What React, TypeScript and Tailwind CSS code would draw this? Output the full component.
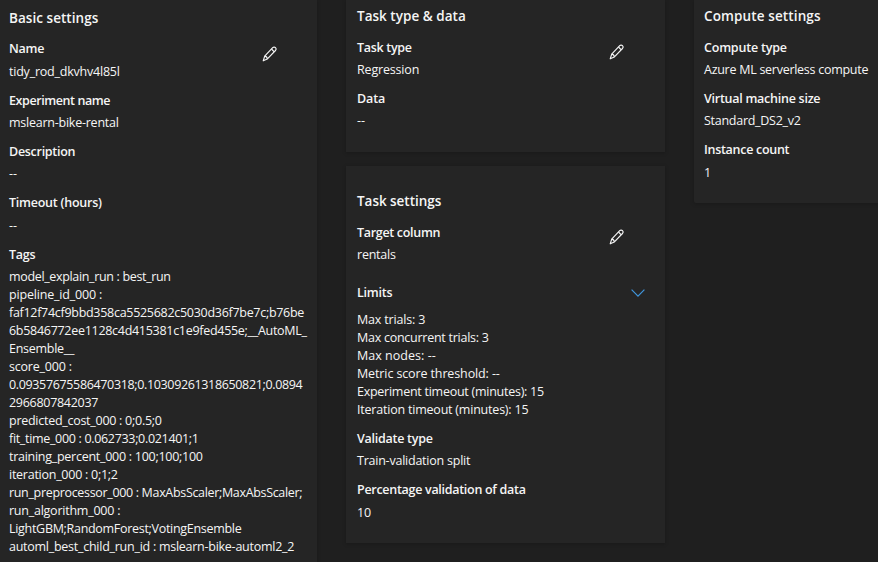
import type { ReactNode } from 'react';

type TextProps = { className?: string; children: ReactNode };

const Heading = ({ className = '', children }: TextProps) => (
  <h2 className={`h-[18px] whitespace-pre text-[13.5px] leading-[18px] font-semibold ${className}`}>{children}</h2>
);

const Label = ({ className = '', children }: TextProps) => (
  <h3 className={`h-[18px] whitespace-pre text-[12.5px] leading-[18px] font-semibold ${className}`}>{children}</h3>
);

const Line = ({ className = '', children }: TextProps) => (
  <p className={`h-[18px] whitespace-pre text-[12.5px] leading-[18px] ${className}`}>{children}</p>
);

const Pencil = () => (
  <svg width="16" height="16" viewBox="0 0 16 16" fill="none" stroke="#f5f5f5" strokeWidth="1.15" strokeLinejoin="round">
    <path d="M10.7 1.7a1.95 1.95 0 0 1 2.8 2.8L5.4 12.9 1.2 14.8 2.7 10.1Z" />
    <path d="M9.5 3 12.3 5.8M2.7 10.1C4 10.2 5.2 11.4 5.4 12.9" />
  </svg>
);

const Chevron = () => (
  <svg width="16" height="16" viewBox="0 0 16 16" fill="none" stroke="#4096dc" strokeWidth="1.2">
    <path d="M1.6 4.7 8 11.1l6.4-6.4" />
  </svg>
);

const card = 'bg-[#252525] shadow-[0_1px_4px_rgba(0,0,0,0.22)]';

export default function App() {
  return (
    <main className="flex h-[562px] w-[878px] items-start overflow-hidden bg-[#1f1f1f] font-['Open_Sans','Noto_Sans',sans-serif] text-[#f5f5f5]">
      <section className={`h-[562px] w-[317px] shrink-0 pt-[9px] pl-[9px] ${card}`}>
        <Heading className="tracking-[0.04px]">Basic settings</Heading>
        <div className="mt-[13px] flex justify-between pr-[39px]">
          <div>
            <Label className="tracking-[-0.24px]">Name</Label>
            <Line className="mt-[5px] tracking-[-0.22px]">tidy_rod_dkvhv4l85l</Line>
          </div>
          <div className="pt-[6px]"><Pencil /></div>
        </div>
        <Label className="mt-[11px] tracking-[-0.41px]">Experiment name</Label>
        <Line className="mt-1 tracking-[-0.24px]">mslearn-bike-rental</Line>
        <Label className="mt-[11px] tracking-[-0.28px]">Description</Label>
        <Line className="mt-1">--</Line>
        <Label className="mt-[11px] tracking-[-0.24px]">Timeout (hours)</Label>
        <Line className="mt-[5px]">--</Line>
        <Label className="mt-[11px] tracking-[-0.28px]">Tags</Label>
        <div className="mt-1">
          <Line className="tracking-[-0.34px]">model_explain_run : best_run</Line>
          <Line className="tracking-[-0.18px]">pipeline_id_000 :</Line>
          <Line className="tracking-[-0.29px]">faf12f74cf9bbd358ca5525682c5030d36f7be7c;b76be</Line>
          <Line className="tracking-[-0.29px]">6b5846772ee1128c4d415381c1e9fed455e;__AutoML_</Line>
          <Line className="tracking-[-0.27px]">Ensemble__</Line>
          <Line className="tracking-[-0.21px]">score_000 :</Line>
          <Line className="tracking-[-0.35px]">0.09357675586470318;0.10309261318650821;0.0894</Line>
          <Line className="tracking-[-0.29px]">2966807842037</Line>
          <Line className="tracking-[-0.27px]">predicted_cost_000 : 0;0.5;0</Line>
          <Line className="tracking-[-0.32px]">fit_time_000 : 0.062733;0.021401;1</Line>
          <Line className="tracking-[-0.27px]">training_percent_000 : 100;100;100</Line>
          <Line className="tracking-[-0.26px]">iteration_000 : 0;1;2</Line>
          <Line className="tracking-[-0.33px]">run_preprocessor_000 : MaxAbsScaler;MaxAbsScaler;</Line>
          <Line className="tracking-[-0.24px]">run_algorithm_000 :</Line>
          <Line className="tracking-[-0.3px]">LightGBM;RandomForest;VotingEnsemble</Line>
          <Line className="tracking-[-0.26px]">automl_best_child_run_id : mslearn-bike-automl2_2</Line>
        </div>
      </section>

      <div className="ml-[29px] flex w-[319px] shrink-0 flex-col gap-[14px]">
        <section className={`h-[152px] pt-[7px] pl-[11px] ${card}`}>
          <Heading className="tracking-[0.02px]">Task type &amp; data</Heading>
          <div className="mt-[14px] flex justify-between pr-10">
            <div>
              <Label className="tracking-[-0.3px]">Task type</Label>
              <Line className="mt-1 tracking-[-0.17px]">Regression</Line>
            </div>
            <div className="pt-[5px]"><Pencil /></div>
          </div>
          <Label className="mt-[11px] tracking-[-0.1px]">Data</Label>
          <Line className="mt-1">--</Line>
        </section>

        <section className={`h-[377px] pt-[26px] pl-[11px] ${card}`}>
          <Heading className="tracking-[-0.04px]">Task settings</Heading>
          <div className="mt-[14px] flex justify-between pr-10">
            <div>
              <Label className="tracking-[-0.31px]">Target column</Label>
              <Line className="mt-1 tracking-[-0.23px]">rentals</Line>
            </div>
            <div className="pt-[5px]"><Pencil /></div>
          </div>
          <div className="mt-5 flex items-center justify-between pr-[19px]">
            <Label className="tracking-[-0.25px]">Limits</Label>
            <Chevron />
          </div>
          <div className="mt-[9px]">
            <Line className="tracking-[-0.17px]">Max trials: 3</Line>
            <Line className="tracking-[-0.26px]">Max concurrent trials: 3</Line>
            <Line className="tracking-[0.03px]">Max nodes: --</Line>
            <Line className="tracking-[-0.12px]">Metric score threshold: --</Line>
            <Line className="tracking-[-0.26px]">Experiment timeout (minutes): 15</Line>
            <Line className="tracking-[-0.21px]">Iteration timeout (minutes): 15</Line>
          </div>
          <Label className="mt-[11px] tracking-[-0.26px]">Validate type</Label>
          <Line className="mt-1 tracking-[-0.23px]">Train-validation split</Line>
          <Label className="mt-[11px] tracking-[-0.29px]">Percentage validation of data</Label>
          <Line className="mt-[5px] tracking-[-0.2px]">10</Line>
        </section>
      </div>

      <section className={`ml-[29px] h-[203px] w-[184px] shrink-0 rounded-bl-[2px] pt-[7px] pl-[10px] ${card}`}>
        <Heading className="tracking-[0.12px]">Compute settings</Heading>
        <Label className="mt-[14px] tracking-[-0.21px]">Compute type</Label>
        <Line className="mt-1 tracking-[-0.27px]">Azure ML serverless compute</Line>
        <Label className="mt-[11px] tracking-[-0.26px]">Virtual machine size</Label>
        <Line className="mt-1 tracking-[-0.27px]">Standard_DS2_v2</Line>
        <Label className="mt-[11px] tracking-[-0.29px]">Instance count</Label>
        <Line className="mt-[5px]">1</Line>
      </section>
    </main>
  );
}
